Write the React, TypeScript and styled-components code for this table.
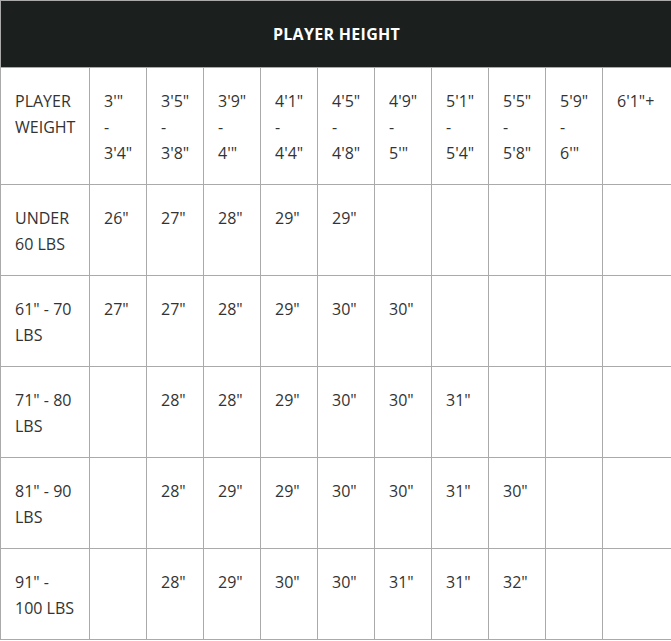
import React from "react";
import styled, { createGlobalStyle } from "styled-components";

const GlobalStyle = createGlobalStyle`
  html, body {
    margin: 0;
    padding: 0;
    background: #ffffff;
  }
  body {
    font-family: "Open Sans", "Liberation Sans", sans-serif;
    color: #333333;
  }
`;

const Table = styled.table`
  width: 672px;
  table-layout: fixed;
  border-collapse: collapse;
  border: 1px solid #aaaaaa;
  font-size: 16px;
  line-height: 26px;
`;

const Col = styled.col<{ $w: number }>`
  width: ${(p) => p.$w}px;
`;

const HeadCell = styled.th`
  background: #1b1f1e;
  color: #ffffff;
  font-weight: 700;
  text-align: center;
  letter-spacing: 0.3px;
  padding: 20px 13px;
  border: 1px solid #aaaaaa;
`;

const Cell = styled.td`
  vertical-align: top;
  text-align: left;
  padding: 20px 13px 18px 14px;
  border: 1px solid #aaaaaa;
  font-weight: 400;
`;

const Line = styled.span`
  display: block;
  white-space: nowrap;
`;

const heights = [
  "3'\" - 3'4\"",
  "3'5\" - 3'8\"",
  "3'9\" - 4'\"",
  "4'1\" - 4'4\"",
  "4'5\" - 4'8\"",
  "4'9\" - 5'\"",
  "5'1\" - 5'4\"",
  "5'5\" - 5'8\"",
  "5'9\" - 6'\"",
  "6'1\"+",
];

const rows: { label: string; values: string[] }[] = [
  { label: "UNDER 60 LBS", values: ["26\"", "27\"", "28\"", "29\"", "29\"", "", "", "", "", ""] },
  { label: "61\" - 70 LBS", values: ["27\"", "27\"", "28\"", "29\"", "30\"", "30\"", "", "", "", ""] },
  { label: "71\" - 80 LBS", values: ["", "28\"", "28\"", "29\"", "30\"", "30\"", "31\"", "", "", ""] },
  { label: "81\" - 90 LBS", values: ["", "28\"", "29\"", "29\"", "30\"", "30\"", "31\"", "30\"", "", ""] },
  { label: "91\" - 100 LBS", values: ["", "28\"", "29\"", "30\"", "30\"", "31\"", "31\"", "32\"", "", ""] },
];

function HeightRange({ text }: { text: string }) {
  const parts = text.split(" - ");
  if (parts.length < 2) return <Line>{text}</Line>;
  return (
    <>
      <Line>{parts[0]}</Line>
      <Line>-</Line>
      <Line>{parts[1]}</Line>
    </>
  );
}

export default function App() {
  return (
    <>
      <GlobalStyle />
      <Table>
        <colgroup>
          <Col $w={89} />
          {heights.slice(0, 9).map((h) => (
            <Col key={h} $w={57} />
          ))}
          <Col $w={70} />
        </colgroup>
        <thead>
          <tr>
            <HeadCell colSpan={11}>PLAYER HEIGHT</HeadCell>
          </tr>
        </thead>
        <tbody>
          <tr>
            <Cell>PLAYER WEIGHT</Cell>
            {heights.map((h) => (
              <Cell key={h}>
                <HeightRange text={h} />
              </Cell>
            ))}
          </tr>
          {rows.map((r) => (
            <tr key={r.label}>
              <Cell>{r.label}</Cell>
              {r.values.map((v, i) => (
                <Cell key={i}>{v}</Cell>
              ))}
            </tr>
          ))}
        </tbody>
      </Table>
    </>
  );
}
